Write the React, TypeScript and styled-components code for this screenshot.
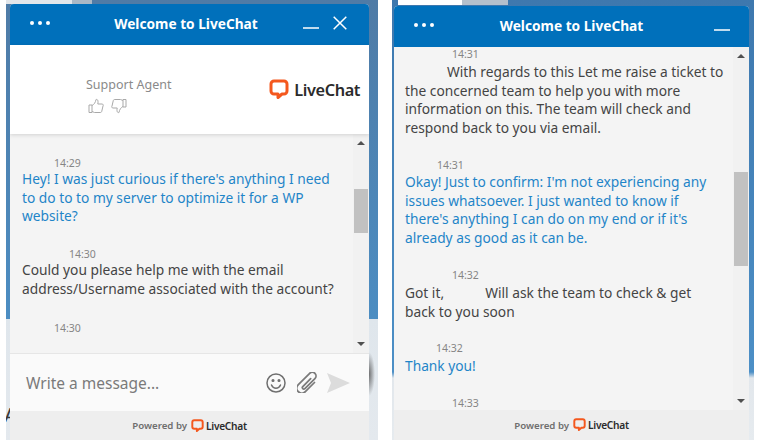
import React from "react";
import styled, { createGlobalStyle } from "styled-components";

const Global = createGlobalStyle`
  html, body { margin: 0; padding: 0; width: 760px; height: 440px; overflow: hidden; }
  body { font-family: "Noto Sans", "Open Sans", sans-serif; }
`;

const Stage = styled.div`
  width: 760px; height: 440px; overflow: hidden; background: #fff;
  display: grid; grid-template-columns: 378px 382px;
`;
const LeftBackdrop = styled.div`
  position: relative; height: 440px; box-sizing: border-box; overflow: hidden;
  margin-left: 6px; padding: 4px 9px 0 4px;
  background:
    linear-gradient(#e2e6ea, #e2e6ea) 0 0 / 66px 4px no-repeat,
    linear-gradient(#a9b8c6, #a9b8c6) 66px 0 / 20px 4px no-repeat,
    radial-gradient(ellipse 6px 22px at 363px 374px, rgba(70,70,70,.75), rgba(70,70,70,0)) no-repeat,
    linear-gradient(#4f7ba6 0, #4c8dc2 319px, #dfe6ec 319px, #e4e9ee 100%);
`;
const RightBackdrop = styled.div`
  height: 440px; box-sizing: border-box; overflow: hidden;
  margin-left: 14px; margin-right: 6px; padding: 6px 5px 0 2px;
  background:
    linear-gradient(#fff, #fff) 6px 0 / 64px 5px no-repeat,
    linear-gradient(#b4c0cc, #b4c0cc) 70px 0 / 46px 5px no-repeat,
    linear-gradient(#3e78ae 0, #4c8fc6 372px, #e2e7ec 378px, #e6ebef 100%);
`;
const CutOffLetter = styled.span`
  position: absolute; left: -2px; top: 404px; z-index: 0;
  font-family: "Liberation Sans", sans-serif; font-size: 20px; color: #3a3a3a;
`;
const Widget = styled.div<{ $h: number }>`
  position: relative; z-index: 1;
  background: #f4f4f4; height: ${p => p.$h}px; display: flex; flex-direction: column;
  border-radius: 4px 4px 0 0; overflow: hidden;
`;
const Header = styled.div<{ $endCol: number }>`
  height: 41px; flex: none; background: #0070bb; color: #fff; box-sizing: border-box; padding-bottom: 3px;
  display: grid; grid-template-columns: 64px 1fr ${p => p.$endCol}px; align-items: center;
`;
const Dots = styled.div`display: flex; gap: 4px; padding-left: 20px;`;
const Dot = styled.span`width: 4px; height: 4px; border-radius: 50%; background: #fff;`;
const Title = styled.div`font-size: 13.7px; font-weight: 700; text-align: center; white-space: nowrap;`;
const Controls = styled.div<{ $pr: number }>`
  display: flex; justify-content: flex-end; gap: 14px; align-items: center; padding-right: ${p => p.$pr}px;
`;
const Agent = styled.div`
  height: 89px; flex: none; background: #fff; box-shadow: 0 1px 4px rgba(0,0,0,.14); box-sizing: border-box;
  display: flex; align-items: center; justify-content: space-between; padding: 0 9px 0 76px; position: relative; z-index: 1;
`;
const AgentInfo = styled.div`display: flex; flex-direction: column; gap: 5px; padding-top: 11px;`;
const AgentName = styled.div`font-size: 12.5px; color: #8a8a8a;`;
const Thumbs = styled.div`display: flex; gap: 7px; padding-left: 2px;`;
const Logo = styled.div<{ $small?: boolean }>`
  display: inline-flex; align-items: center; gap: ${p => p.$small ? 2 : 5}px;
  font-size: ${p => p.$small ? 10.2 : 16.3}px; font-weight: 600;
  color: #2b2b2b; letter-spacing: ${p => p.$small ? -0.3 : -0.4}px;
`;
const Body = styled.div`flex: 1; min-height: 0; display: flex; overflow: hidden;`;
const Messages = styled.div<{ $pt: number; $pl: number; $lh: number }>`
  flex: 1; min-width: 0; padding: ${p => p.$pt}px 0 0 ${p => p.$pl}px; overflow: hidden;
  line-height: ${p => p.$lh}px;
`;
const Time = styled.div<{ $x: number; $mt?: number; $mb?: number }>`
  font-size: 10.5px; line-height: 14px; color: #858585;
  padding-left: ${p => p.$x}px; margin-top: ${p => p.$mt ?? 0}px; margin-bottom: ${p => p.$mb ?? 0}px;
`;
const Msg = styled.div<{ $blue?: boolean }>`
  font-size: 13.75px; color: ${p => p.$blue ? "#1f85c8" : "#444"};
`;
const Line = styled.div<{ $indent?: number }>`padding-left: ${p => p.$indent ?? 0}px; white-space: nowrap;`;
const Redacted = styled.span`display: inline-block; width: 34px;`;
const Scrollbar = styled.div`
  width: 16px; flex: none; background: #f1f1f1; box-sizing: border-box; padding: 7px 0;
  display: flex; flex-direction: column; align-items: center; justify-content: space-between;
`;
const Track = styled.div<{ $top: number; $h: number }>`
  flex: 1; width: 100%; padding-top: ${p => p.$top}px; box-sizing: border-box;
  &::before { content: ""; display: block; width: 14px; margin-left: 1px; height: ${p => p.$h}px; background: #c1c1c1; }
`;
const Arrow = styled.span<{ $down?: boolean }>`
  width: 0; height: 0; border-left: 4px solid transparent; border-right: 4px solid transparent;
  ${p => p.$down ? "border-top: 4px solid #505050;" : "border-bottom: 4px solid #505050;"}
`;
const Composer = styled.div`
  height: 58px; flex: none; background: #fafafa; border-top: 1px solid #e6e6e6; box-sizing: border-box;
  display: flex; align-items: center; padding: 0 19px 0 16px;
`;
const Placeholder = styled.div`flex: 1; font-size: 15.5px; color: #7a7a7a;`;
const ComposerIcons = styled.div`display: flex; align-items: center;`;
const IconSlot = styled.span<{ $ml: number }>`display: flex; margin-left: ${p => p.$ml}px;`;
const Footer = styled.div<{ $h: number }>`
  height: ${p => p.$h}px; flex: none; background: #eeeeee; display: flex; align-items: center; justify-content: center; gap: 4px;
`;
const Powered = styled.span`font-size: 9.7px; font-weight: 600; color: #6f6f6f;`;

const Bubble = ({ s }: { s: number }) => (
  <svg width={s} height={s * 1.05} viewBox="0 0 20 21" fill="none">
    <path d="M5 2h10a3 3 0 0 1 3 3v7a3 3 0 0 1-3 3h-2l-4 3.500v-3.500H5a3 3 0 0 1-3-3V5a3 3 0 0 1 3-3z" stroke="#f4581e" strokeWidth="3" strokeLinejoin="round" />
  </svg>
);
const LogoMark = ({ small }: { small?: boolean }) => (
  <Logo $small={small}><Bubble s={small ? 13 : 20} />LiveChat</Logo>
);
const Minimize = () => (
  <svg width="16" height="12" viewBox="0 0 16 12"><path d="M0 11h16" stroke="#fff" strokeWidth="1.500" /></svg>
);
const Close = () => (
  <svg width="14" height="14" viewBox="0 0 14 14"><path d="M.7.7l12.600 12.600M13.300.7.7 13.300" stroke="#fff" strokeWidth="1.500" /></svg>
);
const ThumbUp = () => (
  <svg width="16" height="16" viewBox="0 0 16 16" fill="none" stroke="#a9a9a9" strokeWidth="1">
    <path d="M1 7h3v7.500H1zM4 7.500c2-1 3.500-3 4-6 1.500-.5 2.500 1 1.800 4.500H14c1.300 0 1.500 1.300 1 2l-1.300 5.500c-.2.700-.7 1-1.400 1H6.500L4 13.500" />
  </svg>
);
const ThumbDown = () => (
  <svg width="16" height="16" viewBox="0 0 16 16" fill="none" stroke="#a9a9a9" strokeWidth="1">
    <path transform="rotate(180 8 8)" d="M1 7h3v7.500H1zM4 7.500c2-1 3.500-3 4-6 1.500-.5 2.500 1 1.800 4.500H14c1.300 0 1.500 1.300 1 2l-1.300 5.500c-.2.700-.7 1-1.400 1H6.500L4 13.500" />
  </svg>
);
const Smile = () => (
  <svg width="20" height="20" viewBox="0 0 20 20" fill="none" stroke="#6f6f6f" strokeWidth="1.500">
    <circle cx="10" cy="10" r="9" />
    <circle cx="7" cy="7.500" r=".8" fill="#6f6f6f" />
    <circle cx="13" cy="7.500" r=".8" fill="#6f6f6f" />
    <path d="M5.500 12c1 2.200 2.500 3.300 4.500 3.300s3.500-1.100 4.500-3.300" strokeLinecap="round" />
  </svg>
);
const Clip = () => (
  <svg width="21" height="21" viewBox="2.500 2.500 17 17" fill="none" stroke="#7a7a7a" strokeWidth="1.400" strokeLinecap="round">
    <path transform="rotate(45 11 11)" d="M15 7v10.500a4 4 0 0 1-8 0V4.500a3 3 0 0 1 6 0V16a1.200 1.200 0 0 1-2.400 0V7" />
  </svg>
);
const Send = () => (
  <svg width="23" height="20" viewBox="0 0 23 20"><path d="M0 0l23 10L0 20l4-10z" fill="#dcdcdc" /></svg>
);

export default function App() {
  return (
    <Stage>
      <Global />
      <LeftBackdrop>
        <CutOffLetter>A</CutOffLetter>
        <Widget $h={436}>
          <Header $endCol={71}>
            <Dots><Dot /><Dot /><Dot /></Dots>
            <Title>Welcome to LiveChat</Title>
            <Controls $pr={22}><Minimize /><Close /></Controls>
          </Header>
          <Agent>
            <AgentInfo>
              <AgentName>Support Agent</AgentName>
              <Thumbs><ThumbUp /><ThumbDown /></Thumbs>
            </AgentInfo>
            <LogoMark />
          </Agent>
          <Body>
            <Messages $pt={22} $pl={12} $lh={18.7}>
              <Time $x={32}>14:29</Time>
              <Msg $blue>
                <Line>Hey! I was just curious if there's anything I need</Line>
                <Line>to do to to my server to optimize it for a WP</Line>
                <Line>website?</Line>
              </Msg>
              <Time $x={47} $mt={21}>14:30</Time>
              <Msg>
                <Line>Could you please help me with the email</Line>
                <Line>address/Username associated with the account?</Line>
              </Msg>
              <Time $x={32} $mt={22}>14:30</Time>
            </Messages>
            <Scrollbar>
              <Arrow />
              <Track $top={44} $h={44} />
              <Arrow $down />
            </Scrollbar>
          </Body>
          <Composer>
            <Placeholder>Write a message...</Placeholder>
            <ComposerIcons>
              <Smile />
              <IconSlot $ml={11}><Clip /></IconSlot>
              <IconSlot $ml={9}><Send /></IconSlot>
            </ComposerIcons>
          </Composer>
          <Footer $h={29}><Powered>Powered by</Powered><LogoMark small /></Footer>
        </Widget>
      </LeftBackdrop>
      <RightBackdrop>
        <Widget $h={434}>
          <Header $endCol={64}>
            <Dots><Dot /><Dot /><Dot /></Dots>
            <Title>Welcome to LiveChat</Title>
            <Controls $pr={19}><Minimize /></Controls>
          </Header>
          <Body>
            <Messages $pt={0} $pl={11} $lh={18.5}>
              <Time $x={47} $mb={2}>14:31</Time>
              <Msg>
                <Line $indent={42}>With regards to this Let me raise a ticket to</Line>
                <Line>the concerned team to help you with more</Line>
                <Line>information on this. The team will check and</Line>
                <Line>respond back to you via email.</Line>
              </Msg>
              <Time $x={32} $mt={21} $mb={1}>14:31</Time>
              <Msg $blue>
                <Line>Okay! Just to confirm: I'm not experiencing any</Line>
                <Line>issues whatsoever. I just wanted to know if</Line>
                <Line>there's anything I can do on my end or if it's</Line>
                <Line>already as good as it can be.</Line>
              </Msg>
              <Time $x={47} $mt={21} $mb={2}>14:32</Time>
              <Msg>
                <Line>Got it, <Redacted /> Will ask the team to check &amp; get</Line>
                <Line>back to you soon</Line>
              </Msg>
              <Time $x={31} $mt={20} $mb={2}>14:32</Time>
              <Msg $blue><Line>Thank you!</Line></Msg>
              <Time $x={47} $mt={20}>14:33</Time>
            </Messages>
            <Scrollbar>
              <Arrow />
              <Track $top={114} $h={94} />
              <Arrow $down />
            </Scrollbar>
          </Body>
          <Footer $h={30}><Powered>Powered by</Powered><LogoMark small /></Footer>
        </Widget>
      </RightBackdrop>
    </Stage>
  );
}
